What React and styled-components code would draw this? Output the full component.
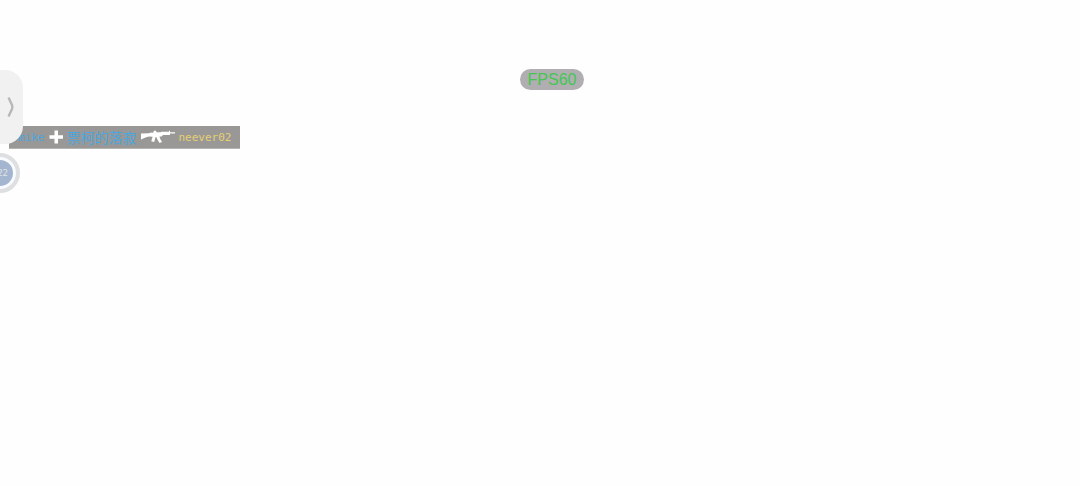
import React from 'react';
import styled, { createGlobalStyle } from 'styled-components';


const GlobalStyle = createGlobalStyle`
    body {
        margin: 0;
        background: #fefefe;
        font-family: "Liberation Sans", "Noto Sans CJK SC", sans-serif;
    }
`

const Screen = styled.main`
    position: relative;
    display: flex;
    flex-direction: column;
    min-height: 100vh;
    padding-top: 69px;
    box-sizing: border-box;
    overflow: hidden;
`

const FpsBadge = styled.div`
    align-self: center;
    margin-left: 24px;
    padding: 0 8px;
    border-radius: 11px;
    background: #b0aeb0;
    color: #43c653;
    font-size: 16px;
    line-height: 21px;
`

const KillFeed = styled.div`
    display: flex;
    align-items: center;
    align-self: flex-start;
    height: 23px;
    margin: 36px 0 4px 9px;
    padding: 0 9px;
    background: #999896;
    border-bottom: 1px solid #b4b4b2;
    box-sizing: border-box;
    gap: 4px;
`

const PlayerName = styled.span`
    padding-top: 2px;
    color: ${props => props.enemy ? '#e6cf72' : '#4ca5dc'};
    font-family: "DejaVu Sans Mono", "Noto Sans CJK SC", monospace;
    font-size: ${props => props.wide ? 14 : 11}px;
    line-height: 22px;
`

const Handle = styled.button`
    position: absolute;
    top: 70px;
    left: 0;
    display: flex;
    align-items: center;
    justify-content: flex-end;
    width: 23px;
    height: 74px;
    padding: 0 9px 0 0;
    border: 0;
    border-radius: 0 18px 18px 0;
    background: #f1f1f1;
`

const Timer = styled.div`
    display: flex;
    align-items: center;
    justify-content: flex-end;
    width: 40px;
    height: 40px;
    margin-left: -20px;
    padding: 3px;
    border: 4px solid #dedfe0;
    border-radius: 50%;
    background: #f8fbff;
    box-sizing: border-box;
`

const TimerValue = styled.span`
    flex: 1;
    height: 26px;
    padding-right: 5px;
    border-radius: 50%;
    background: #a4b5d0;
    color: #e1e4e8;
    font-family: "DejaVu Sans Mono", monospace;
    font-size: 9px;
    line-height: 26px;
    text-align: right;
    box-sizing: border-box;
`


const PlusIcon = () => (
    <svg width="14" height="14" viewBox="0 0 14 14" aria-hidden="true">
        <path d="M5.500 0.500h3.500v4.700h5v3.600H9v4.700H5.500V8.800H0.500V5.200h5z" fill="#fff" />
    </svg>
)

const RifleIcon = () => (
    <svg width="34" height="14" viewBox="0 0 34 14" aria-hidden="true">
        <path
            d="M0 3.500L8 3.200L10 2.500L12 2.700L13 0.800H15L15.500 2.200H20V1.800H28V0.800H29V2.300H34V3.600H29V5H22L20.500 6.500H18.500L19 8.500L21 12L18.500 13L16.400 9.500L15.300 7L14.500 7.200L13.200 12L10.300 11.300L11.600 6.800L8 6.500L4.500 7.500L0 9.500z"
            fill="#fff"
        />
    </svg>
)

const ChevronIcon = () => (
    <svg width="7" height="22" viewBox="0 0 7 22" aria-hidden="true">
        <path d="M1.500 1.500L5 9Q5.700 11 5 13L1.500 20.500" fill="none" stroke="#b7b7b7" strokeWidth="2.400" />
    </svg>
)


const App = () => {
    return (
        <>
            <GlobalStyle />
            <Screen>
                <FpsBadge>FPS60</FpsBadge>
                <KillFeed>
                    <PlayerName>mike</PlayerName>
                    <PlusIcon />
                    <PlayerName wide>票柯的落寂</PlayerName>
                    <RifleIcon />
                    <PlayerName enemy>neever02</PlayerName>
                </KillFeed>
                <Timer>
                    <TimerValue>22</TimerValue>
                </Timer>
                <Handle type="button" aria-label="Open panel">
                    <ChevronIcon />
                </Handle>
            </Screen>
        </>
    )
}

export default App
